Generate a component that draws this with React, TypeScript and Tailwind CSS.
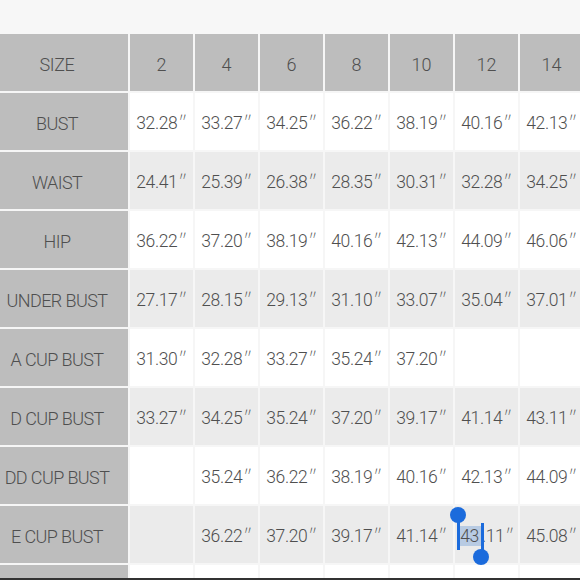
import React from "react";

const sizes = ["2", "4", "6", "8", "10", "12", "14"];

const rows: { label: string; values: string[] }[] = [
  { label: "BUST", values: ["32.28", "33.27", "34.25", "36.22", "38.19", "40.16", "42.13"] },
  { label: "WAIST", values: ["24.41", "25.39", "26.38", "28.35", "30.31", "32.28", "34.25"] },
  { label: "HIP", values: ["36.22", "37.20", "38.19", "40.16", "42.13", "44.09", "46.06"] },
  { label: "UNDER BUST", values: ["27.17", "28.15", "29.13", "31.10", "33.07", "35.04", "37.01"] },
  { label: "A CUP BUST", values: ["31.30", "32.28", "33.27", "35.24", "37.20", "", ""] },
  { label: "D CUP BUST", values: ["33.27", "34.25", "35.24", "37.20", "39.17", "41.14", "43.11"] },
  { label: "DD CUP BUST", values: ["", "35.24", "36.22", "38.19", "40.16", "42.13", "44.09"] },
  { label: "E CUP BUST", values: ["", "36.22", "37.20", "39.17", "41.14", "43.11", "45.08"] },
  { label: "", values: ["", "", "", "", "", "", ""] },
];

function Inch() {
  return <span className="font-[Lato] font-light ml-[1px]">″</span>;
}

function Selected() {
  return (
    <span className="relative">
      <span className="bg-[#b8cbe3] pl-[1px] pr-[3px]">43</span>
      <span className="absolute left-[-2px] top-[-11px] w-[3px] h-[35px] bg-[#1b6bdc]" />
      <span className="absolute left-[-9px] top-[-19px] w-[16px] h-[16px] rounded-full bg-[#1b6bdc]" />
      <span className="absolute right-[-2px] top-[-3px] w-[3px] h-[28px] bg-[#1b6bdc]" />
      <span className="absolute right-[-7px] top-[23px] w-[16px] h-[16px] rounded-full bg-[#1b6bdc]" />
    </span>
  );
}

export default function App() {
  return (
    <div
      className="w-[580px] h-[580px] overflow-hidden bg-[#f7f7f7] flex flex-col text-[#4f4f4f]"
      style={{ fontFamily: "Roboto, Lato, sans-serif" }}
    >
      <div className="h-[34px] shrink-0" />
      <div className="h-[544px] overflow-hidden shrink-0">
        <div className="grid grid-cols-[128px_repeat(7,63px)] auto-rows-[57px] gap-[2px] bg-[#f6f6f6] w-[583px] font-light">
          <div className="bg-[#bdbdbd] flex items-center justify-center pt-[3px] pr-[14px] text-[18px] tracking-[-0.4px]">
            SIZE
          </div>
          {sizes.map((s) => (
            <div
              key={s}
              className="bg-[#bdbdbd] flex items-center justify-center pt-[3px] text-[18px]"
            >
              {s}
            </div>
          ))}
          {rows.map((r, ri) => {
            const bg = ri % 2 === 0 ? "bg-white" : "bg-[#ebebeb]";
            return (
              <React.Fragment key={ri}>
                <div className="bg-[#bdbdbd] flex items-center justify-center pt-[3px] pr-[14px] whitespace-nowrap text-[18px] tracking-[-0.6px]">
                  {r.label}
                </div>
                {r.values.map((v, vi) => (
                  <div
                    key={vi}
                    className={`${bg} flex items-center justify-center pt-[3px] whitespace-nowrap text-[17.5px] tracking-[-0.4px]`}
                  >
                    {ri === 7 && vi === 5 ? (
                      <span>
                        <Selected />
                        .11
                        <Inch />
                      </span>
                    ) : v ? (
                      <span>
                        {v}
                        <Inch />
                      </span>
                    ) : null}
                  </div>
                ))}
              </React.Fragment>
            );
          })}
        </div>
      </div>
      <div className="h-[2px] bg-[#333333] shrink-0" />
    </div>
  );
}
